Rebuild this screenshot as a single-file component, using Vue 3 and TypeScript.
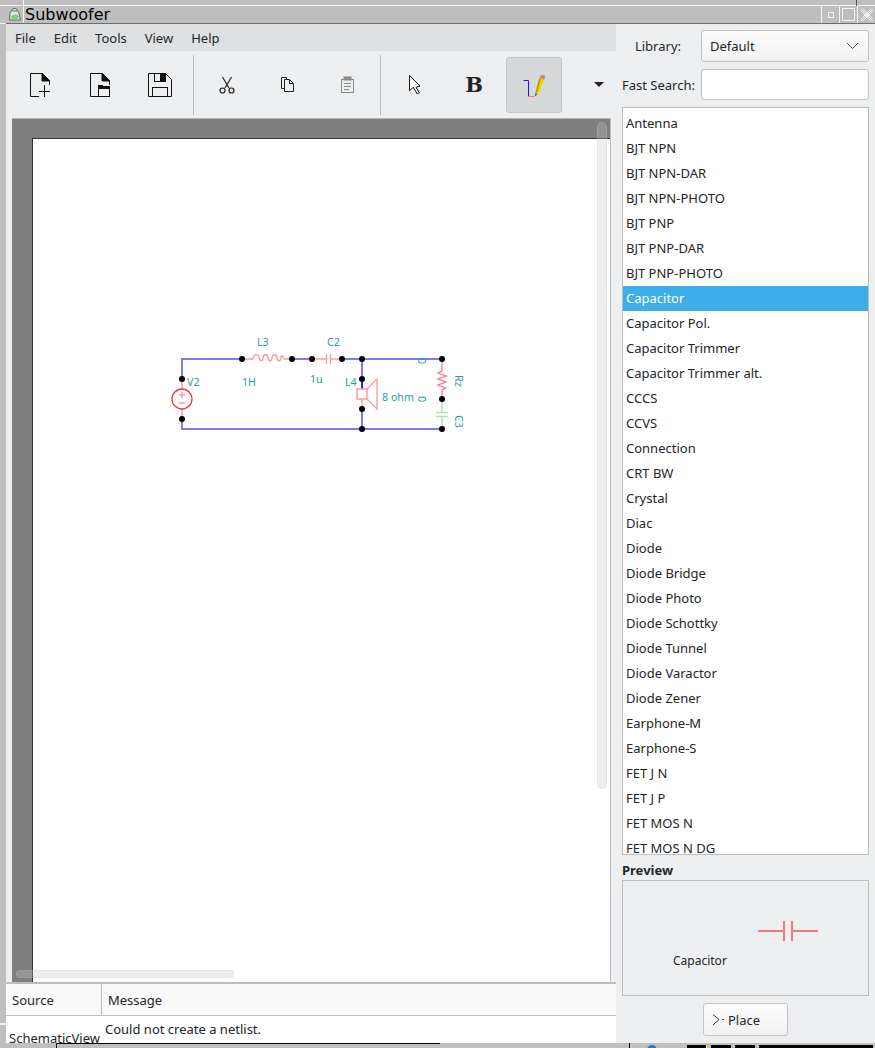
<script setup lang="ts">
const parts: string[] = [
  'Antenna', 'BJT NPN', 'BJT NPN-DAR', 'BJT NPN-PHOTO', 'BJT PNP', 'BJT PNP-DAR', 'BJT PNP-PHOTO',
  'Capacitor', 'Capacitor Pol.', 'Capacitor Trimmer', 'Capacitor Trimmer alt.', 'CCCS', 'CCVS',
  'Connection', 'CRT BW', 'Crystal', 'Diac', 'Diode', 'Diode Bridge', 'Diode Photo', 'Diode Schottky',
  'Diode Tunnel', 'Diode Varactor', 'Diode Zener', 'Earphone-M', 'Earphone-S', 'FET J N', 'FET J P',
  'FET MOS N', 'FET MOS N DG'
]
const menus: string[] = ['File', 'Edit', 'Tools', 'View', 'Help']
// junctions of the schematic, in page coordinates
const nodes: [number, number][] = [
  [182, 379], [182, 419], [242, 359], [292, 359], [312, 359], [342, 359], [362, 359], [442, 359],
  [362, 379], [362, 409], [362, 429], [442, 399], [442, 429]
]
</script>

<template>
  <div class="window">
    <i class="tick tick-left"></i>
    <i class="tick tick-right"></i>
    <i class="tick tick-under"></i>
    <i class="tick tick-break"></i>
    <header class="titlebar">
      <div class="app-icon">
        <svg width="15" height="15" viewBox="0 0 15 15">
          <path d="M3 6 L6 1.5 H9 L12 6 L13.5 13 H2.5 Z" fill="#e4e8e4" stroke="#666" />
          <path d="M4 9 L9 7 L12 9 L11 12 H5 Z" fill="#7fd07f" />
          <path d="M5 4 H10" stroke="#666" />
        </svg>
      </div>
      <span class="title">Subwoofer</span>
      <div class="wm-btn"><i class="wm-min"></i></div>
      <div class="wm-btn"><i class="wm-max"></i></div>
      <div class="wm-btn">
        <svg width="14" height="14" viewBox="0 0 14 14" fill="none" stroke="#eee">
          <path d="M1 1 L13 13 M13 1 L1 13 M3 1 L13 11 M1 3 L11 13 M11 1 L1 11 M13 3 L3 13" />
        </svg>
      </div>
    </header>

    <div class="body">
      <div class="main">
        <nav class="menubar">
          <span v-for="m in menus" :key="m">{{ m }}</span>
        </nav>

        <div class="toolbar">
          <button class="tool">
            <svg width="24" height="26" viewBox="0 0 24 26" fill="none" stroke="#111">
              <path d="M14 1.5 H2.5 V24.5 H11" />
              <path d="M14 1 L22 9 H14 Z" fill="#111" />
              <path d="M21.5 9 V13 M11 19.5 H22 M16.5 13 V25" />
            </svg>
          </button>
          <button class="tool">
            <svg width="24" height="26" viewBox="0 0 24 26" fill="none" stroke="#111">
              <path d="M14 1.5 H2.5 V24.5 H10" />
              <path d="M14 1 L22 9 H14 Z" fill="#111" />
              <path d="M21.5 9 V13" />
              <rect x="10.5" y="16.5" width="11" height="8" />
              <path d="M10 13 H15 V14 H22 V17 H10 Z" fill="#111" stroke="none" />
            </svg>
          </button>
          <button class="tool">
            <svg width="26" height="26" viewBox="0 0 26 26" fill="none" stroke="#111">
              <path d="M1.5 1.5 H18.5 L24.5 7.5 V24.5 H1.5 Z" />
              <rect x="7.5" y="1.5" width="11" height="8" />
              <rect x="13" y="1" width="6" height="9" fill="#111" stroke="none" />
              <rect x="5.5" y="15.5" width="15" height="9" />
            </svg>
          </button>
          <div class="sep"></div>
          <button class="tool">
            <svg width="16" height="18" viewBox="0 0 16 18" fill="none" stroke="#222" stroke-width="1.2">
              <path d="M3.5 1 L10 12 M12.5 1 L6 12" />
              <circle cx="3.5" cy="14.5" r="2.5" />
              <circle cx="12.5" cy="14.5" r="2.5" />
            </svg>
          </button>
          <button class="tool">
            <svg width="15" height="17" viewBox="0 0 15 17" fill="#eeeff1" stroke="#222">
              <path d="M1.5 1.5 H6.5 V12.5 H1.5 Z" />
              <path d="M4.5 3.5 H9.5 L13.5 7.5 V15.5 H4.5 Z" />
              <path d="M9.5 3.5 V7.5 H13.5" fill="none" />
            </svg>
          </button>
          <button class="tool">
            <svg width="15" height="17" viewBox="0 0 15 17" fill="none" stroke="#8a8a8a">
              <rect x="1.5" y="3.5" width="12" height="13" />
              <rect x="4" y="1" width="7" height="3" fill="#8a8a8a" />
              <path d="M4 7.5 H11 M4 10.5 H11 M4 13.5 H9" />
            </svg>
          </button>
          <div class="sep"></div>
          <button class="tool">
            <svg width="13" height="20" viewBox="0 0 13 20" fill="#fff" stroke="#111">
              <path d="M1.5 0.5 V15.7 L5.3 12.3 L9.3 19 L11.3 17.7 L8 12.3 L12 11 Z" />
            </svg>
          </button>
          <button class="tool bold-tool">B</button>
          <button class="tool active">
            <svg width="26" height="26" viewBox="0 0 26 26" fill="none">
              <path d="M2.5 8.5 H7.5 V24" stroke="#1414ff" />
              <path d="M7.5 24.5 H14" stroke="#ff5a5a" stroke-dasharray="2 1" />
              <path d="M14 22 L18.5 6 L23.5 7.5 L17 22 Z" fill="#f2d400" />
              <path d="M14 22 L18.5 6 L20 6.5 L15.5 22 Z" fill="#b89a00" />
              <path d="M18.5 6 L20 3 L24 3.5 L23.5 7.5 Z" fill="#cf8070" />
              <path d="M14 22 L14 24 L16.5 22.5 Z" fill="#3333aa" />
            </svg>
          </button>
          <div class="more"></div>
        </div>

        <div class="canvas">
          <div class="page">
            <svg class="schematic" width="578" height="844" viewBox="33 139 578 844">
              <g fill="none" stroke="#7a7af5" stroke-width="2">
                <path d="M182 379 V359 H242 M292 359 H312 M342 359 H442 M182 419 V429 H442 M362 359 V379 M362 409 V429" />
              </g>
              <path d="M362 379 V389" stroke="#2a2ae0" stroke-width="2" />
              <g fill="none" stroke="#f99" stroke-width="1.3">
                <path d="M242 359 H253 C254 353.5 258 353.5 259 357.5 C260 361.5 263 362.5 263 357.5 C264 353.5 267 353.5 268 357.5 C269 362.5 272 361.5 272 357.5 C273 353.5 276 353.5 277 357.5 C278 362.5 281 361.5 281 357.5 C281 354.5 283 355.5 284 359 H292" />
                <path d="M312 359 H326 M330 359 H342" stroke-width="1.6" />
                <path d="M326.5 354 V364 M330.5 354 V364" />
                <path d="M442 359 V371 L438 373 L446 376 L438 379 L446 382 L438 385 L446 388 L442 390 V399" stroke="#f77" />
                <rect x="357" y="389" width="10" height="10" stroke-width="1.5" />
                <path d="M367 389 L377 379 V409 L367 399" />
                <path d="M362 399 V409" />
                <path d="M182 379 V389 M182 409 V419" stroke-width="1.5" />
                <path d="M179 395 H185 M182 392 V398 M179 403 H185" stroke-width="1.3" />
              </g>
              <circle cx="182" cy="399" r="10" fill="none" stroke="#f33" stroke-width="1.3" />
              <g fill="none" stroke="#b9ddb9" stroke-width="1.6">
                <path d="M442 399 V412 M442 416 V429" />
                <path d="M436 412.5 H448 M436 416.5 H448" />
              </g>
              <g fill="#000">
                <circle v-for="(n, i) in nodes" :key="i" :cx="n[0]" :cy="n[1]" r="3" />
              </g>
              <g class="labels">
                <text x="257" y="346">L3</text>
                <text x="242" y="386">1H</text>
                <text x="327" y="346">C2</text>
                <text x="310" y="383">1u</text>
                <text x="187" y="386">V2</text>
                <text x="345" y="386">L4</text>
                <text x="382" y="401">8 ohm</text>
                <text transform="translate(418 358) rotate(90)">0</text>
                <text transform="translate(418 396) rotate(90)">0</text>
                <text transform="translate(455 375) rotate(90)">Rz</text>
                <text transform="translate(455 415) rotate(90)">C3</text>
              </g>
            </svg>
          </div>
          <div class="vscroll"></div>
          <div class="hscroll"></div>
        </div>

        <div class="messages">
          <div class="msg-head">
            <div class="col-source">Source</div>
            <div class="col-message">Message</div>
          </div>
          <div class="msg-row">
            <span class="msg-source">SchematicView</span>
            <span class="msg-text">Could not create a netlist.</span>
          </div>
        </div>
      </div>

      <aside class="side">
        <div class="field">
          <label class="lib-label">Library:</label>
          <div class="combo">
            <span>Default</span>
            <svg width="13" height="8" viewBox="0 0 13 8" fill="none" stroke="#555">
              <path d="M1 1 L6.5 6.5 L12 1" />
            </svg>
          </div>
        </div>
        <div class="field search">
          <label class="search-label">Fast Search:</label>
          <div class="input"></div>
        </div>
        <ul class="list">
          <li v-for="p in parts" :key="p" :class="{ selected: p === 'Capacitor' }">{{ p }}</li>
        </ul>
        <div class="preview-title">Preview</div>
        <div class="preview">
          <svg width="244" height="114" viewBox="623 881 244 114">
            <path d="M758 931 H784 M792 931 H818 M784 921 V941 M792 921 V941" fill="none" stroke="#f87878" stroke-width="2" />
            <text x="673" y="965" class="preview-name">Capacitor</text>
          </svg>
        </div>
        <div class="place-row">
          <button class="place">
            <svg width="14" height="12" viewBox="0 0 14 12" fill="none" stroke="#333">
              <path d="M1 0.5 L7 5.5 L1 11" />
              <path d="M10 5.5 H12" />
            </svg>
            Place
          </button>
        </div>
      </aside>
    </div>
    <footer class="desk">
      <div class="desk-a"></div>
      <div class="desk-b"></div>
      <div class="desk-c"></div>
      <div class="tray">
        <span class="tray-globe"></span>
        <span class="tray-box first"></span>
        <span class="tray-box"></span>
        <span class="tray-box"></span>
        <span class="tray-box wide"></span>
      </div>
    </footer>
  </div>
</template>

<style>
html, body {
  margin: 0;
  background: #bfbfbf;
}
</style>

<style scoped>
.window {
  position: relative;
  width: 875px;
  height: 1048px;
  display: flex;
  flex-direction: column;
  overflow: hidden;
  background: #bfbfbf;
  font-family: "Noto Sans", sans-serif;
  font-size: 13px;
  color: #232629;
}
/* window manager frame marks above the title bar */
.tick {
  position: absolute;
  display: block;
}
.tick-left {
  left: 23px;
  top: 0;
  width: 1px;
  height: 6px;
  background: #f4f4f4;
}
.tick-right {
  left: 856px;
  top: 0;
  width: 1px;
  height: 6px;
  background: #555;
}
.tick-under {
  left: 0;
  top: 23px;
  width: 6px;
  height: 1px;
  background: #f4f4f4;
}
.tick-break {
  left: 0;
  top: 1023px;
  width: 6px;
  height: 2px;
  background: #f4f4f4;
}
.titlebar {
  height: 17px;
  margin-top: 5px;
  display: flex;
  align-items: center;
  border-top: 1px solid #f4f4f4;
  border-bottom: 1px solid #6e6e6e;
  background: #bebebe;
  flex: none;
}
.app-icon {
  width: 17px;
  height: 17px;
  margin-left: 6px;
  display: flex;
  align-items: center;
  justify-content: center;
  border-right: 1px solid #f4f4f4;
}
.title {
  flex: 1;
  margin-left: 1px;
  padding-top: 1px;
  font-family: "DejaVu Sans", sans-serif;
  font-size: 16px;
  color: #000;
  line-height: 16px;
}
.wm-btn {
  width: 17px;
  height: 17px;
  border-left: 1px solid #f4f4f4;
  display: flex;
  align-items: center;
  justify-content: center;
}
.wm-min {
  width: 4px;
  height: 4px;
  border: 1px solid #f4f4f4;
}
.wm-max {
  width: 11px;
  height: 11px;
  border: 1px solid #f4f4f4;
}
.body {
  flex: 1;
  min-height: 0;
  display: flex;
  padding-left: 6px;
}
.main {
  width: 610px;
  display: flex;
  flex-direction: column;
  background: #eeeff1;
}
.menubar {
  height: 27px;
  display: flex;
  align-items: center;
  gap: 18px;
  padding-left: 9px;
  background: #dfe0e2;
  flex: none;
}
.toolbar {
  height: 67px;
  display: flex;
  align-items: center;
  gap: 4px;
  padding-left: 6px;
  flex: none;
}
.tool {
  width: 56px;
  height: 56px;
  padding: 0;
  display: flex;
  align-items: center;
  justify-content: center;
  background: none;
  border: 1px solid transparent;
  border-radius: 3px;
}
.tool.active {
  background: #d7d8da;
  border-color: #c4c5c7;
}
.bold-tool {
  font-family: "DejaVu Serif", serif;
  font-weight: 700;
  font-size: 21px;
  color: #222;
}
.sep {
  width: 1px;
  height: 60px;
  margin: 0 1px;
  background: #bcbcbc;
}
.more {
  margin-left: 28px;
  border-left: 5px solid transparent;
  border-right: 5px solid transparent;
  border-top: 5px solid #222;
}
.canvas {
  position: relative;
  flex: 1;
  min-height: 0;
  margin: 0 5px 0 6px;
  padding: 19px 0 0 20px;
  background: #7f7f7f;
  border-top: 1px solid #b5b5b5;
  border-right: 1px solid #bdbdbd;
  overflow: hidden;
}
.page {
  height: 100%;
  background: #fff;
  border-left: 1px solid #333;
  border-top: 1px solid #333;
}
.schematic {
  display: block;
}
.labels text {
  font-family: "Noto Sans", sans-serif;
  font-size: 10.7px;
  fill: #2a9d9d;
}
.vscroll {
  position: absolute;
  left: 585px;
  top: 3px;
  width: 10px;
  height: 667px;
  box-sizing: border-box;
  border-radius: 5px;
  background: rgba(200, 200, 200, 0.3);
  border: 1px solid rgba(190, 190, 190, 0.2);
}
.hscroll {
  position: absolute;
  left: 4px;
  top: 851px;
  width: 218px;
  height: 8px;
  box-sizing: border-box;
  border-radius: 4px;
  background: rgba(200, 200, 200, 0.3);
  border: 1px solid rgba(190, 190, 190, 0.2);
}
.messages {
  height: 59px;
  flex: none;
  background: #fff;
  border-top: 2px solid #bdbdbd;
  overflow: hidden;
}
.msg-head {
  height: 31px;
  display: flex;
  align-items: center;
  background: #fafafa;
  border-bottom: 1px solid #bdbdbd;
}
.col-source {
  width: 89px;
  height: 100%;
  display: flex;
  align-items: center;
  padding-left: 6px;
  border-right: 1px solid #bdbdbd;
}
.col-message {
  padding-left: 6px;
}
.msg-row {
  height: 27px;
  display: flex;
  overflow: hidden;
}
.msg-source {
  width: 96px;
  padding: 11px 0 0 3px;
  line-height: 22px;
  white-space: nowrap;
}
.msg-text {
  line-height: 26px;
}
.side {
  width: 259px;
  box-sizing: border-box;
  padding: 0 6px 0 6px;
  display: flex;
  flex-direction: column;
  background: #eeeff1;
}
.field {
  display: flex;
  align-items: center;
  margin-top: 6px;
  height: 32px;
}
.lib-label {
  width: 60px;
  text-align: right;
  margin-right: 19px;
  position: relative;
  left: -1px;
}
.search-label {
  width: 79px;
}
.combo {
  flex: 1;
  height: 32px;
  box-sizing: border-box;
  display: flex;
  align-items: center;
  justify-content: space-between;
  padding: 0 9px 0 8px;
  background: linear-gradient(#fcfcfc, #f2f2f3);
  border: 1px solid #c2c3c5;
  border-radius: 3px;
}
.search {
  margin-top: 7px;
  height: 31px;
}
.input {
  flex: 1;
  height: 31px;
  box-sizing: border-box;
  background: #fff;
  border: 1px solid #c2c3c5;
  border-radius: 3px;
}
.list {
  margin: 7px 0 0;
  padding: 3px 0 0;
  list-style: none;
  height: 748px;
  box-sizing: border-box;
  overflow: hidden;
  background: #fff;
  border: 1px solid #bdbdbd;
  flex: none;
}
.list li {
  height: 25px;
  line-height: 24px;
  padding-left: 3px;
  white-space: nowrap;
}
.list li.selected {
  background: #3daee9;
  color: #fff;
}
.preview-title {
  margin-top: 6px;
  height: 19px;
  line-height: 19px;
  font-weight: 700;
}
.preview {
  height: 116px;
  box-sizing: border-box;
  border: 1px solid #bdbdbd;
  flex: none;
}
.preview svg {
  display: block;
}
.preview-name {
  font-family: "Noto Sans", sans-serif;
  font-size: 12px;
  fill: #232629;
}
.place-row {
  margin-top: 7px;
  padding-left: 81px;
}
.place {
  width: 85px;
  height: 33px;
  display: flex;
  align-items: center;
  gap: 2px;
  padding: 0 0 0 8px;
  font: inherit;
  color: inherit;
  background: linear-gradient(#fcfcfc, #f2f2f3);
  border: 1px solid #c2c3c5;
  border-radius: 3px;
}
.desk {
  height: 5px;
  flex: none;
  display: flex;
  background: #bfbfbf;
}
.desk-a {
  width: 56px;
}
.desk-b {
  width: 383px;
  border-left: 1px solid #000;
  border-top: 1px solid #000;
}
.desk-c {
  width: 189px;
}
.tray {
  flex: 1;
  display: flex;
  gap: 4px;
  padding-top: 2px;
  border-left: 1px solid #000;
  overflow: hidden;
}
.tray-globe {
  width: 10px;
  height: 10px;
  margin-left: 17px;
  border-radius: 50%;
  background: #2a7ab8;
  flex: none;
}
.tray-box {
  width: 20px;
  height: 4px;
  background: #000;
  flex: none;
}
.tray-box.first {
  margin-left: 26px;
  width: 19px;
  border-right: 1px solid #ff0;
}
.tray-box.wide {
  width: 114px;
}
</style>
